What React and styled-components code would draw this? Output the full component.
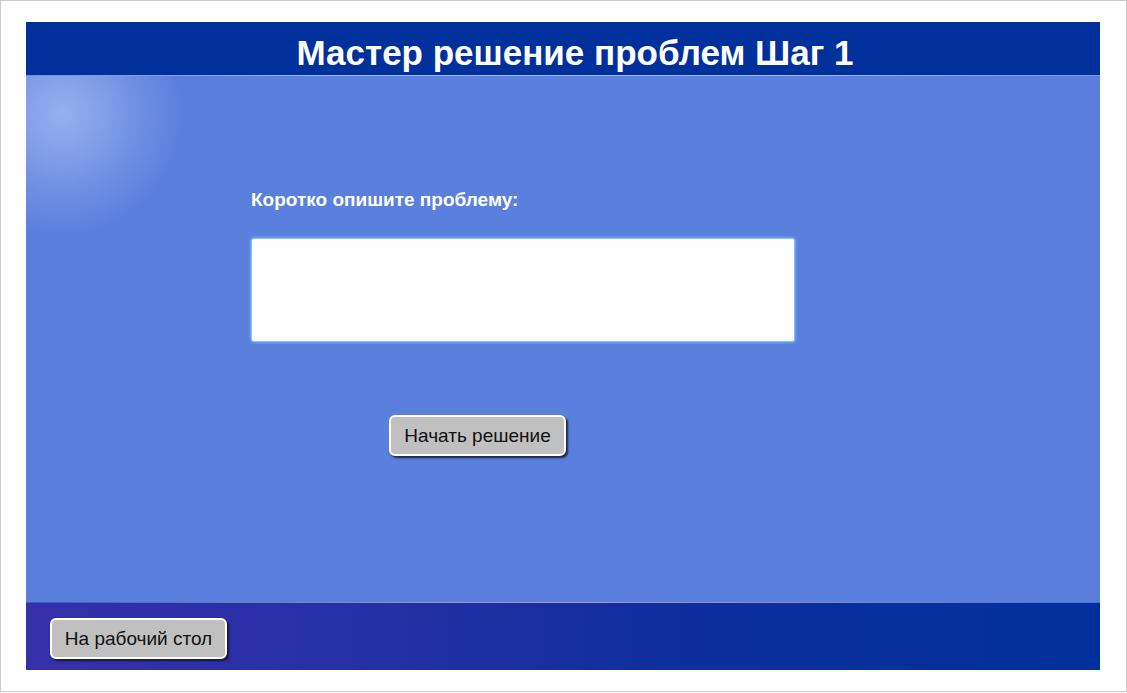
import React from "react";
import styled, { createGlobalStyle } from "styled-components";

const GlobalStyle = createGlobalStyle`
  html, body {
    margin: 0;
    padding: 0;
    background: #ffffff;
    font-family: "Liberation Sans", Arial, sans-serif;
  }
`;

const Page = styled.div`
  box-sizing: border-box;
  width: 1127px;
  height: 692px;
  border: 1px solid #cccccc;
  padding: 21px 26px 21px 25px;
  background: #ffffff;
`;

const Window = styled.div`
  display: flex;
  flex-direction: column;
  height: 100%;
`;

const Header = styled.div`
  box-sizing: border-box;
  height: 53px;
  background-color: #00309c;
  padding: 13px 0 0 24px;
  text-align: center;

  h1 {
    margin: 0;
    font-size: 35px;
    line-height: 35px;
    font-weight: 700;
    color: #ffffff;
  }
`;

const Shine = styled.div`
  height: 1px;
  background: linear-gradient(
    to right,
    #6f8fe0 0%,
    #a3b8f0 30%,
    #a3b8f0 70%,
    #7b98e3 100%
  );
`;

const Main = styled.div`
  flex: 1;
  box-sizing: border-box;
  padding: 113px 0 0 225px;
  background-color: #5b7fdd;
  background-image: radial-gradient(
    circle at 36px 38px,
    #94b0ef 0px,
    #8aa6ec 25px,
    #7492e4 70px,
    #5b7fdd 120px
  );
`;

const Form = styled.div`
  display: flex;
  flex-direction: column;
  align-items: flex-start;
`;

const Label = styled.label`
  font-size: 19px;
  line-height: 22px;
  font-weight: 700;
  color: #ffffff;
  margin-bottom: 27px;
`;

const Describe = styled.textarea`
  box-sizing: border-box;
  width: 544px;
  height: 104px;
  border: 1px solid #7cc4ff;
  border-radius: 3px;
  box-shadow: 0 0 3px #8fd0ff;
  background: #ffffff;
  resize: none;
  outline: none;
  font-family: "Liberation Sans", Arial, sans-serif;
  font-size: 16px;
  padding: 6px 8px;
  margin-bottom: 73px;
`;

const Button = styled.button`
  box-sizing: border-box;
  width: 177px;
  height: 41px;
  margin-left: ${({ shift }) => shift || 0}px;
  padding: 0;
  background-color: #c0c0c0;
  border: 2px solid #ffffff;
  border-radius: 6px;
  box-shadow: 2px 2px 2px rgba(20, 20, 40, 0.85);
  font-family: "Liberation Sans", Arial, sans-serif;
  font-size: 19px;
  color: #111111;
  cursor: pointer;
`;

const Footer = styled.div`
  box-sizing: border-box;
  height: 68px;
  padding: 16px 0 0 24px;
  position: relative;
  background: linear-gradient(
    to right,
    #3630a9 0%,
    #2630a7 30%,
    #0f2e9f 60%,
    #00309c 100%
  );

  &::before {
    content: "";
    position: absolute;
    left: 0;
    right: 0;
    top: 0;
    height: 1px;
    background: linear-gradient(
      to right,
      #3f55c4 0%,
      #9a8fb8 35%,
      #b49aa8 50%,
      #8a8fc0 70%,
      #4a6ccc 100%
    );
  }
`;

const App = () => {
  return (
    <>
      <GlobalStyle />
      <Page>
        <Window>
          <Header>
            <h1>Мастер решение проблем Шаг 1</h1>
          </Header>
          <Shine />
          <Main>
            <Form>
              <Label htmlFor="problem">Коротко опишите проблему:</Label>
              <Describe id="problem" />
              <Button shift={138}>Начать решение</Button>
            </Form>
          </Main>
          <Footer>
            <Button>На рабочий стол</Button>
          </Footer>
        </Window>
      </Page>
    </>
  );
};

export default App;
